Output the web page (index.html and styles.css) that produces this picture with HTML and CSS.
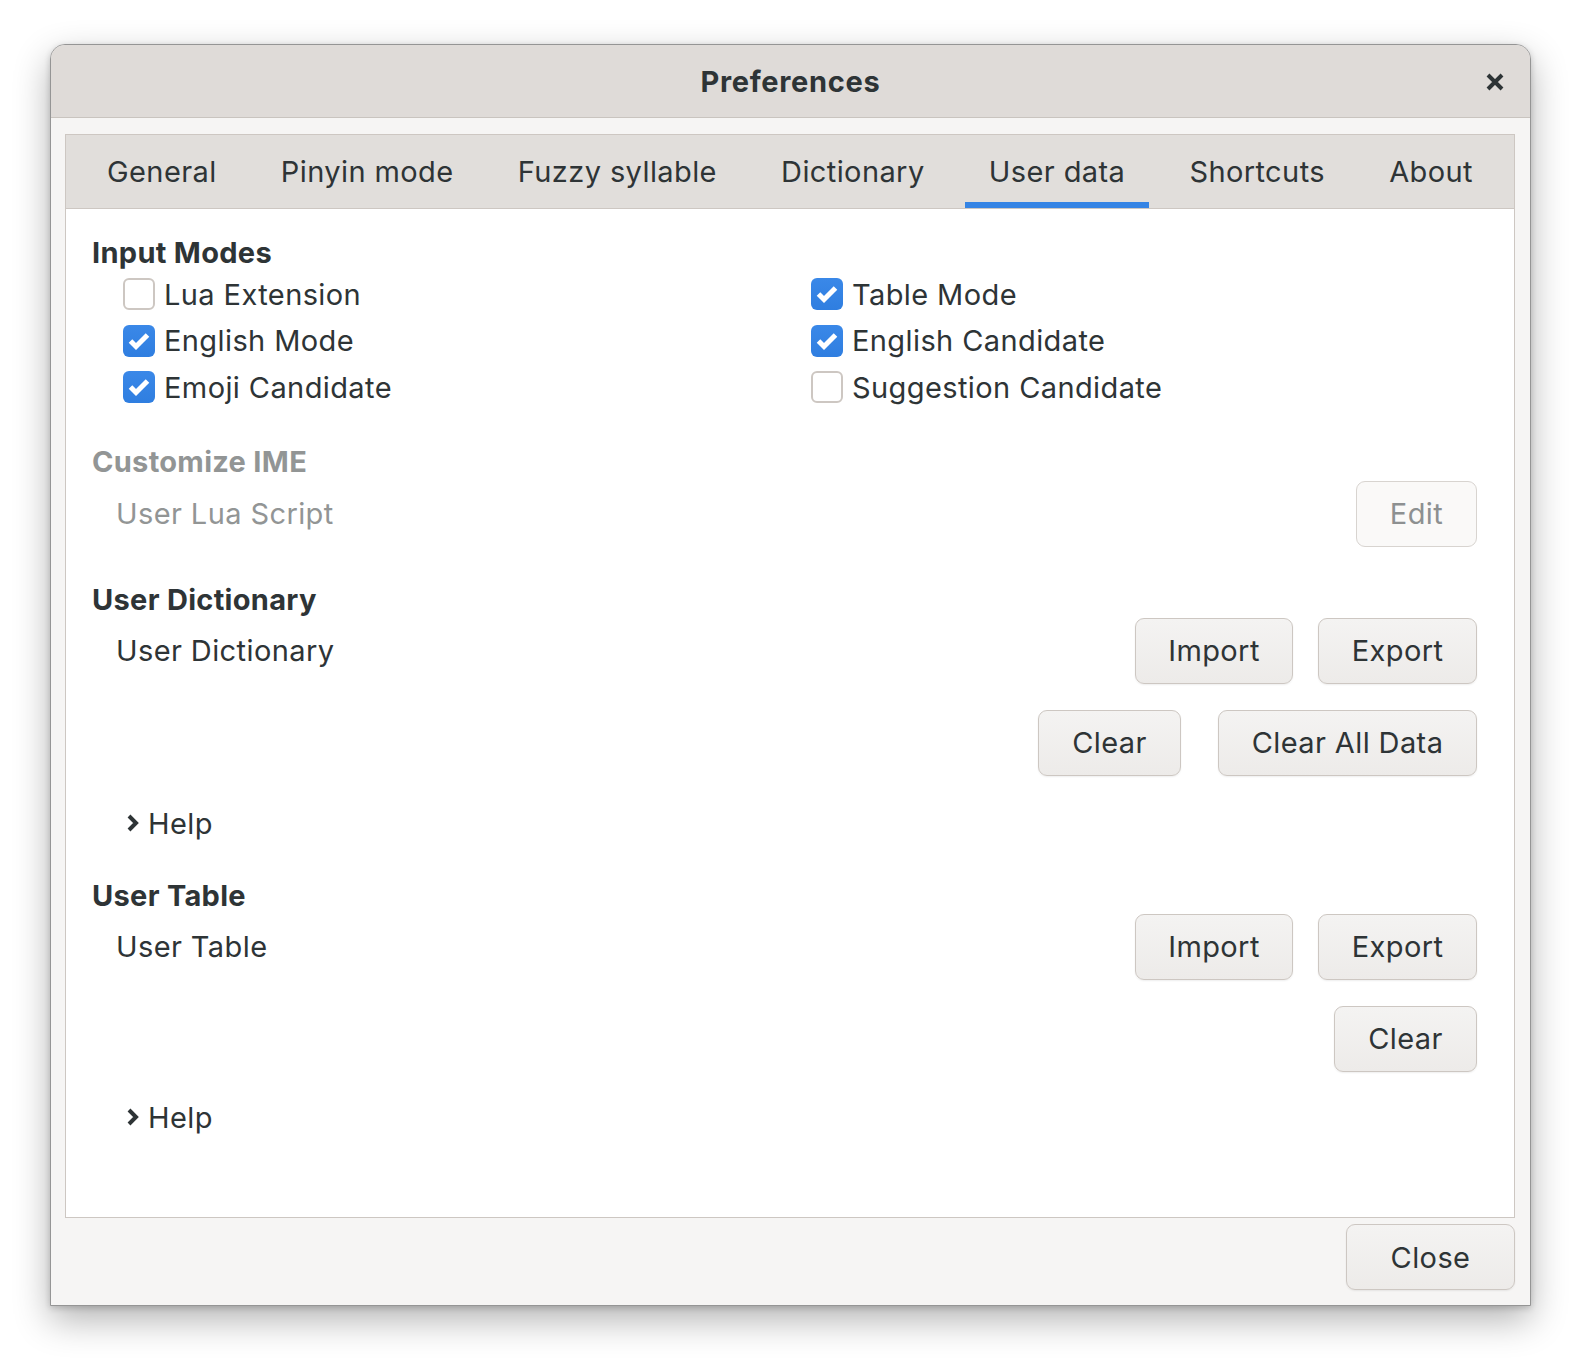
FILE: index.html
```html
<!DOCTYPE html>
<html lang="en">
<head>
<meta charset="UTF-8">
<meta name="viewport" content="width=device-width, initial-scale=1.0">
<title>Preferences</title>
    <link rel="stylesheet" href="styles.css">
</head>
<body>
    <div class="window">
        <div class="titlebar">
            <span class="title">Preferences</span>
            <span class="close-x">
                <svg width="18" height="18" viewBox="0 0 18 18"><path d="M2 2 L16 16 M16 2 L2 16" stroke="#2e3436" stroke-width="4" stroke-linecap="butt"/></svg>
            </span>
        </div>
        <div class="dialog-body">
            <div class="notebook">
                <div class="tabs">
                    <div class="tab">General</div>
                    <div class="tab">Pinyin mode</div>
                    <div class="tab">Fuzzy syllable</div>
                    <div class="tab">Dictionary</div>
                    <div class="tab active">User data</div>
                    <div class="tab">Shortcuts</div>
                    <div class="tab">About</div>
                </div>
                <div class="page">
                    <div class="heading">Input Modes</div>
                    <div class="checks">
                        <div class="check"><span class="box"></span>Lua Extension</div>
                        <div class="check"><span class="box on"><svg width="32" height="32" viewBox="0 0 32 32"><path d="M7.5 16 L13 21.5 L24.5 10" fill="none" stroke="#fff" stroke-width="5"/></svg></span>Table Mode</div>
                        <div class="check"><span class="box on"><svg width="32" height="32" viewBox="0 0 32 32"><path d="M7.5 16 L13 21.5 L24.5 10" fill="none" stroke="#fff" stroke-width="5"/></svg></span>English Mode</div>
                        <div class="check"><span class="box on"><svg width="32" height="32" viewBox="0 0 32 32"><path d="M7.5 16 L13 21.5 L24.5 10" fill="none" stroke="#fff" stroke-width="5"/></svg></span>English Candidate</div>
                        <div class="check"><span class="box on"><svg width="32" height="32" viewBox="0 0 32 32"><path d="M7.5 16 L13 21.5 L24.5 10" fill="none" stroke="#fff" stroke-width="5"/></svg></span>Emoji Candidate</div>
                        <div class="check"><span class="box"></span>Suggestion Candidate</div>
                    </div>

                    <div class="heading disabled sec-ime">Customize IME</div>
                    <div class="row row-lua">
                        <span class="label disabled">User Lua Script</span>
                        <div class="btns">
                            <button class="btn btn-edit" disabled>Edit</button>
                        </div>
                    </div>

                    <div class="heading sec-dict">User Dictionary</div>
                    <div class="row row-first">
                        <span class="label">User Dictionary</span>
                        <div class="btns">
                            <button class="btn btn-import">Import</button>
                            <button class="btn btn-export">Export</button>
                        </div>
                    </div>
                    <div class="row row-second">
                        <div class="btns wide-gap">
                            <button class="btn btn-clear">Clear</button>
                            <button class="btn btn-clearall">Clear All Data</button>
                        </div>
                    </div>
                    <div class="help">
                        <svg width="14" height="22" viewBox="0 0 14 22"><path d="M3 4 L10 11 L3 18" fill="none" stroke="#2e3436" stroke-width="4"/></svg>
                        <span>Help</span>
                    </div>

                    <div class="heading sec-table">User Table</div>
                    <div class="row row-first">
                        <span class="label">User Table</span>
                        <div class="btns">
                            <button class="btn btn-import">Import</button>
                            <button class="btn btn-export">Export</button>
                        </div>
                    </div>
                    <div class="row row-second">
                        <div class="btns">
                            <button class="btn btn-clear">Clear</button>
                        </div>
                    </div>
                    <div class="help help-last">
                        <svg width="14" height="22" viewBox="0 0 14 22"><path d="M3 4 L10 11 L3 18" fill="none" stroke="#2e3436" stroke-width="4"/></svg>
                        <span>Help</span>
                    </div>
                </div>
            </div>
            <div class="actions">
                <button class="btn btn-close">Close</button>
            </div>
        </div>
    </div>
</body>
</html>
```

FILE: styles.css
```css
*{
    box-sizing: border-box;
}
html{
    background: #ffffff;
}
body{
    margin: 0;
    padding: 44px 0 58px 50px;
    font-family: Inter, "Noto Sans", sans-serif;
    font-size: 29px;
    letter-spacing: 0.4px;
    color: #2e3436;
}

.window{
    width: 1481px;
    height: 1262px;
    border: 1px solid #959595;
    border-radius: 15px 15px 0 0;
    background: #f6f5f4;
    box-shadow: 0 14px 36px rgba(0,0,0,0.30), 0 2px 6px rgba(0,0,0,0.18);
    display: flex;
    flex-direction: column;
}

.titlebar{
    position: relative;
    height: 73px;
    background: #dfdbd8;
    border-bottom: 1px solid #c9c4bf;
    border-radius: 14px 14px 0 0;
    display: flex;
    align-items: center;
    justify-content: center;
}
.title{
    font-weight: 700;
    letter-spacing: 0.7px;
}
.close-x{
    position: absolute;
    right: 26px;
    top: 28px;
    line-height: 0;
}

.dialog-body{
    flex: 1;
    padding: 16px 15px 15px 14px;
    display: flex;
    flex-direction: column;
}

.notebook{
    height: 1084px;
    border: 1px solid #cdc7c2;
    display: flex;
    flex-direction: column;
}
.tabs{
    height: 74px;
    background: #e1dedb;
    border-bottom: 1px solid #cdc7c2;
    display: flex;
    justify-content: space-between;
    padding: 0 17px;
}
.tab{
    padding: 0 24px;
    display: flex;
    align-items: center;
}
.tab.active{
    box-shadow: inset 0 -6px 0 #3584e4;
}

.page{
    flex: 1;
    background: #ffffff;
    padding: 26px 37px 0 26px;
}
.heading{
    font-weight: 700;
    letter-spacing: 0.3px;
    line-height: 35px;
    height: 35px;
}
.disabled{
    color: #929595;
}

.checks{
    margin: 1px 0 0 31px;
    display: grid;
    grid-template-columns: 688px auto;
    grid-auto-rows: 46.5px;
}
.check{
    display: flex;
    align-items: center;
    gap: 9px;
}
.box{
    width: 32px;
    height: 32px;
    border: 2px solid #cdc7c2;
    border-radius: 6px;
    background: #ffffff;
    line-height: 0;
}
.box.on{
    border: none;
    background: linear-gradient(#3a88e8, #2f7ee0);
}

.sec-ime{
    margin-top: 33px;
}
.sec-dict{
    margin-top: 35px;
}
.sec-table{
    margin-top: 37px;
}

.row{
    display: flex;
    align-items: center;
    height: 66px;
}
.row-lua{
    margin-top: 2px;
}
.row-first{
    margin-top: 1px;
}
.row-second{
    margin-top: 26px;
}
.label{
    margin-left: 24px;
}
.btns{
    margin-left: auto;
    display: flex;
    gap: 25px;
}
.btns.wide-gap{
    gap: 37px;
}

.btn{
    height: 66px;
    padding: 0;
    font-family: inherit;
    font-size: 29px;
    letter-spacing: 0.4px;
    color: #2e3436;
    border: 1px solid #cdc7c2;
    border-radius: 9px;
    background: linear-gradient(#f4f3f2, #edebe9);
    box-shadow: 0 1px 2px rgba(0,0,0,0.07);
}
.btn-import{ width: 158px; }
.btn-export{ width: 159px; }
.btn-clear{ width: 143px; }
.btn-clearall{ width: 259px; }
.btn-edit{
    width: 121px;
    color: #8d9091;
    background: #faf9f8;
    border-color: #d8d4d0;
    box-shadow: none;
}
.btn-close{
    width: 169px;
}

.help{
    margin: 30px 0 0 34px;
    height: 35px;
    display: flex;
    align-items: center;
    gap: 8px;
}
.help-last{
    margin-top: 28px;
}

.actions{
    margin-top: 6px;
    display: flex;
    justify-content: flex-end;
}
```
